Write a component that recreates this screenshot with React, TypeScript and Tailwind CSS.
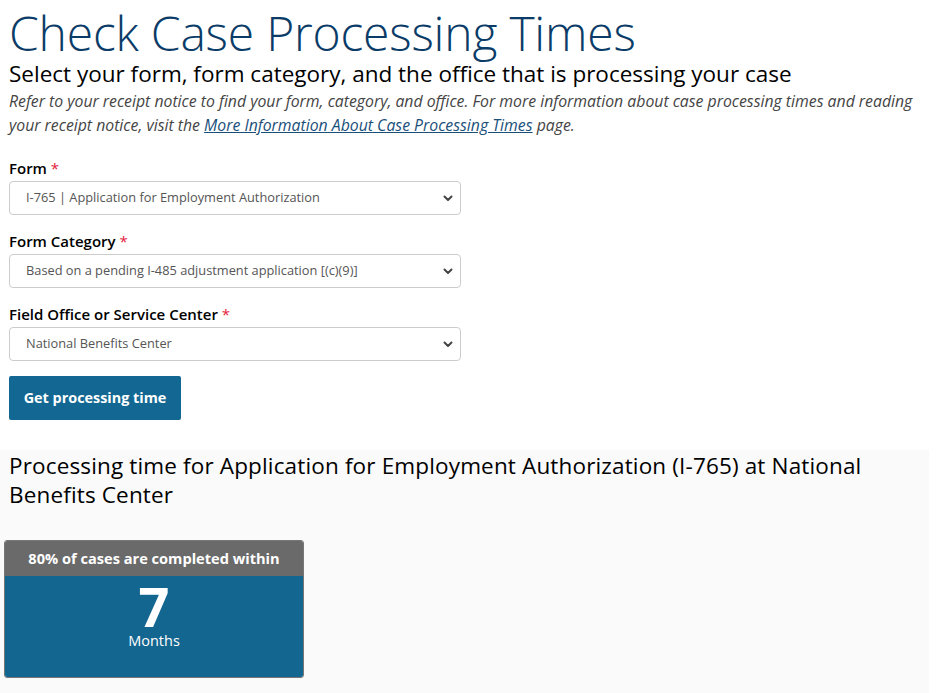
import React from "react";

function Chevron() {
  return (
    <svg width="12" height="12" viewBox="0 0 12 12" className="shrink-0">
      <path d="M2.5 4.5 L6 8 L9.5 4.5" fill="none" stroke="#444" strokeWidth="2" strokeLinecap="round" strokeLinejoin="round" />
    </svg>
  );
}

function Field({ label, value }: { label: string; value: string }) {
  return (
    <div className="flex flex-col">
      <div className="text-[15px] font-semibold text-black leading-[20px]">
        {label} <span className="text-[#e31c3d] font-normal">*</span>
      </div>
      <div className="mt-[3px] w-[452px] h-[34px] border border-[#cccccc] rounded-[4px] bg-white flex items-center justify-between pl-[16px] pr-[6px]">
        <span className="text-[12.8px] text-[#555]">{value}</span>
        <Chevron />
      </div>
    </div>
  );
}

export default function App() {
  return (
    <div className="w-[944px] h-[693px] overflow-hidden bg-white font-['Open_Sans',sans-serif]">
      <div className="px-[9px]">
        <h1 className="text-[48px] font-light text-[#0b3c68] leading-[54px] pt-[6px] tracking-[-0.2px]">Check Case Processing Times</h1>
        <h2 className="text-[22.5px] text-black leading-[28px]">Select your form, form category, and the office that is processing your case</h2>
        <p className="text-[15.8px] italic text-[#444] leading-[24px] mt-[1px] whitespace-nowrap">
          Refer to your receipt notice to find your form, category, and office. For more information about case processing times and reading
          <br />
          your receipt notice, visit the <span className="underline text-[#1a4f7a]">More Information About Case Processing Times</span> page.
        </p>
        <div className="mt-[21px] flex flex-col gap-[16px]">
          <Field label="Form" value="I-765 | Application for Employment Authorization" />
          <Field label="Form Category" value="Based on a pending I-485 adjustment application [(c)(9)]" />
          <Field label="Field Office or Service Center" value="National Benefits Center" />
        </div>
        <button className="mt-[15px] w-[172px] h-[44px] bg-[#136893] rounded-[2px] text-white text-[14.4px] font-bold">Get processing time</button>
      </div>
      <div className="mt-[30px] w-[929px] h-[300px] bg-[#fafafa]">
        <div className="px-[9px] pt-[1px] text-[22.5px] tracking-[0.15px] text-black leading-[29px] max-w-[898px]">
          Processing time for Application for Employment Authorization (I-765) at National Benefits Center
        </div>
        <div className="ml-[4px] mt-[31px] w-[300px] rounded-[3px] overflow-hidden border border-[#777]">
          <div className="h-[35px] bg-[#6a6a6a] flex items-center justify-center text-white font-bold text-[14.6px]">80% of cases are completed within</div>
          <div className="h-[101px] bg-[#126690] flex flex-col items-center text-white">
            <div className="text-[54px] font-bold leading-[54px] mt-[3px]">7</div>
            <div className="text-[14.5px] leading-[18px] mt-[-1px]">Months</div>
          </div>
        </div>
      </div>
    </div>
  );
}
